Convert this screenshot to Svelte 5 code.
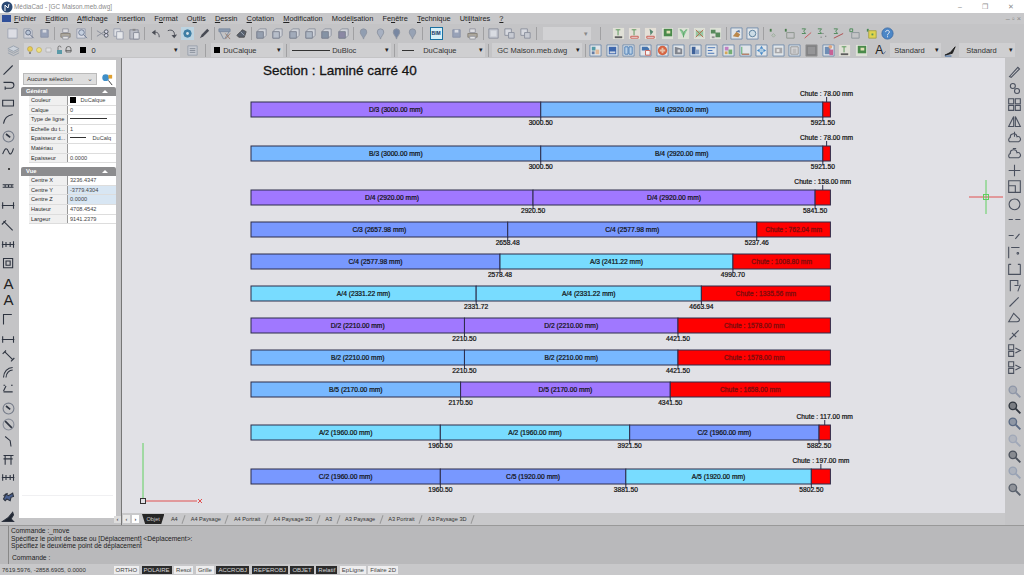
<script>
  const scale = 579.4 / 6000;
  const px = (mm) => 251 + mm * scale;
  const barEnd = px(6000);

  const colors = { D: "#a078ff", B: "#78b8ff", C: "#7898ff", A: "#78dcff" };

  const rows = [
    { y: 102, pieces: ["D/3|3000.00", "B/4|2920.00"], marks: [3000.5, 5921.5], chute: "78.00" },
    { y: 146, pieces: ["B/3|3000.00", "B/4|2920.00"], marks: [3000.5, 5921.5], chute: "78.00" },
    { y: 190, pieces: ["D/4|2920.00", "D/4|2920.00"], marks: [2920.5, 5841.5], chute: "158.00" },
    { y: 222, pieces: ["C/3|2657.98", "C/4|2577.98"], marks: [2658.48, 5237.46], chute: "762.04" },
    { y: 254, pieces: ["C/4|2577.98", "A/3|2411.22"], marks: [2578.48, 4990.7], chute: "1008.80" },
    { y: 286, pieces: ["A/4|2331.22", "A/4|2331.22"], marks: [2331.72, 4663.94], chute: "1335.56" },
    { y: 318, pieces: ["D/2|2210.00", "D/2|2210.00"], marks: [2210.5, 4421.5], chute: "1578.00" },
    { y: 350, pieces: ["B/2|2210.00", "B/2|2210.00"], marks: [2210.5, 4421.5], chute: "1578.00" },
    { y: 382, pieces: ["B/5|2170.00", "D/5|2170.00"], marks: [2170.5, 4341.5], chute: "1658.00" },
    { y: 425, pieces: ["A/2|1960.00", "A/2|1960.00", "C/2|1960.00"], marks: [1960.5, 3921.5, 5882.5], chute: "117.00" },
    { y: 469, pieces: ["C/2|1960.00", "C/5|1920.00", "A/5|1920.00"], marks: [1960.5, 3881.5, 5802.5], chute: "197.00" },
  ];

  const segments = (row) =>
    row.pieces.map((p, i) => {
      const [name, len] = p.split("|");
      const from = i === 0 ? 0 : row.marks[i - 1];
      return {
        x: px(from),
        w: (row.marks[i] - from) * scale,
        color: colors[name[0]],
        label: `${name} (${len} mm)`,
      };
    });

  // [before, underlined letter, after]
  const menus = [
    ["", "F", "ichier"], ["", "E", "dition"], ["", "A", "ffichage"], ["", "I", "nsertion"], ["F", "o", "rmat"],
    ["O", "u", "tils"], ["", "D", "essin"], ["", "C", "otation"], ["", "M", "odification"],
    ["Modél", "i", "sation"], ["Fe", "n", "être"], ["", "T", "echnique"], ["Uti", "l", "itaires"], ["", "?", ""],
  ];

  const props = [
    ["Couleur", "DuCalque", "swatch"], ["Calque", "0"], ["Type de ligne", "", "line"], ["Echelle du t...", "1"],
    ["Epaisseur d...", "DuCalq", "short"], ["Matériau", ""], ["Epaisseur", "0.0000"],
  ];
  const view = [
    ["Centre X", "3236.4347"], ["Centre Y", "-3779.4304", 1], ["Centre Z", "0.0000", 1],
    ["Hauteur", "4708.4542"], ["Largeur", "9141.2379"],
  ];

  const tabs = ["A4", "A4 Paysage", "A4 Portrait", "A4 Paysage 3D", "A3", "A3 Paysage", "A3 Portrait", "A3 Paysage 3D"];
  const flags = [
    ["ORTHO", 0], ["POLAIRE", 1], ["Resol", 0], ["Grille", 0], ["ACCROBJ", 1],
    ["REPEROBJ", 1], ["OBJET", 1], ["Relatif", 1], ["EpLigne", 0], ["Filaire 2D", 0],
  ];

  // each icon: list of [path, fill, stroke] on a 14x14 grid
  const B = "#5f7fa8";
  const box = (...rest) => [["M1 1h12v12H1z", "#e9eef2", B], ...rest];
  const pin = (c) => [["M7 2a3.5 3.5 0 013.5 3.5C10.5 8 7 11 7 13 7 11 3.5 8 3.5 5.5A3.5 3.5 0 017 2z", c, "#7f8898"]];
  const cube = (c) => [["M2 5l3-3h7v7l-3 3H2z", "#d4d7de", "#808694"], ["M2 5h7v7H2z", c, "#6b7284"]];
  const sigma = (c) => [["M2 2h4L4 4.5 6 7H2", 0, "#2d7a3c"], ["M5 12l7-6", 0, c]];
  const icons = {
    doc: [["M2 2h10v10H2z", "#e2e4ec", "#9aa0b0"]],
    find: [["M2 2h7l2 2v8H2z", "#d3d6e0", "#9098a8"], ["M4 6a2.6 2.6 0 105.2 0 2.6 2.6 0 00-5.2 0z", "#b5c4da", "#4c5a76"], ["M8.5 8l4 4", 0, "#4c5a76"]],
    save: [["M3 3h8v8H3z", "#8e9ab5", "#7c87a0"], ["M5 3h4v3H5z", "#dde0e8"]],
    print: [["M4 2h6v4H4z", "#e4e4e8", "#8a8e98"], ["M2 7h10v4H2z", "#a8a294", "#7a7468"], ["M4 10h6v3H4z", "#eee", "#8a8e98"]],
    view: [["M2 2h9v10H2z", "#dde0ea", "#8d94a6"], ["M4 6a3 3 0 106 0 3 3 0 00-6 0z", "#c6d2e4", "#5a6a88"], ["M9 8l4 4", 0, "#5a6a88"]],
    cut: [["M1 4l8 5M1 10l8-5", 0, "#7a8090"], ["M9 5a2 2 0 104 0 2 2 0 00-4 0zM9 9a2 2 0 104 0 2 2 0 00-4 0z", "#dde", "#333a48"]],
    copy: [["M2 2h7v8H2z", "#e4e6ec", "#9096a6"], ["M5 5h7v8H5z", "#eef0f4", "#9096a6"]],
    paste: [["M2 3h9v10H2z", "#b8bcc6", "#7a8090"], ["M5 2h3v2H5z", "#777"], ["M6 6h6v7H6z", "#e8eaf0", "#7a8090"]],
    undo: [["M11 11c0-5-3-6-6-5", 0, "#2c303a"], ["M7 3L3 6l4 3z", "#2c303a"]],
    redo: [["M3 4c5-2 8 1 7 6", 0, "#2c303a"], ["M7 9l3 3 3-4z", "#2c303a"]],
    orbit: [["M0 0h14v14H0z", "#bcd8e8"], ["M3 7a4 4 0 108 0 4 4 0 00-8 0z", "#1d6d9c", "#1d6d9c"], ["M5.5 7a1.5 1.5 0 103 0 1.5 1.5 0 00-3 0z", "#d8e8f0"]],
    brush: [["M2 12l2-4 6-6 2 2-6 6z", "#2a2e38"]],
    props: [["M1 2h12v3H1z", "#7e92ac", "#6a7c96"], ["M2 5l4 8M12 5l-5 8", 0, "#6a7c96"], ["M8 7l5 6M13 7l-5 6", 0, "#8a6a5a"]],
    eraser: [["M2 9l6-6 4 2-2 6H4z", "#3c4656", "#333"], ["M6 5l4 4", 0, "#9ab"]],
    c1: cube("#8a97aa"), c2: cube("#b4bdcc"), c3: cube("#9aa6b8"), c4: cube("#a8b4c4"), c5: cube("#76879e"), c6: cube("#7d7a9c"),
    p1: pin("#8595ac"), p2: pin("#a0acc0"), p3: pin("#66799a"), p4: pin("#8c9ab0"),
    sheet: [["M2 2h10v10H2z", "#c8ccd6", "#7e8494"], ["M4 4h6v6H4z", "#dfe2ea"]],
    sheets: [["M2 2h7v7H2z", "#dcdfe6", "#7e8494"], ["M6 6h6v6H6z", "#c8ccd6", "#7e8494"]],
    layers: [["M7 2l6 3-6 3-6-3z", "#cfd6df", "#8c98a8"], ["M1 7l6 3 6-3M1 9.5l6 3 6-3", 0, "#8c98a8"]],
    list: [["M2 2h10v10H2z", "#c8ccd4", "#9098a6"], ["M4 5h6M4 7h6M4 9h6", 0, "#777f8e"]],
    nor: [["M2 2h10v10H2z", "#f0f0e8"], ["M4 3h5M6.5 3v5", 0, "#3c8a3c"], ["M3 10h8", 0, "#222"]],
    t1: [["M1 1h12v12H1z", "#e8e8dc"], ["M4 3h5M6.5 3v6", 0, "#3c8a3c"], ["M3 10h8v2H3z", "#444"]],
    t2: [["M1 1h12v12H1z", "#ece6dc"], ["M4 3h5M6.5 3v6", 0, "#3c8a3c"], ["M3 10h8v2H3z", "#fff", "#c83c30"]],
    t3: [["M1 1h12v12H1z", "#ece6dc"], ["M6 2l4 3-3 4z", "#3c7a5c"], ["M3 10h8v2H3z", "#fff", "#c83c30"]],
    pflag: [["M1 1h12v12H1z", "#e4e8dc"], ["M3 2h9v8H3z", "#2c7c2c"], ["M6 4h4v3H6z", "#e8e8b0"]],
    leaf: [["M1 1h12v12H1z", "#e4e8dc"], ["M3 3c4 0 4 3 4 8M11 3c-3 0-4 3-4 8", "#7ccc8a", "#48a058"]],
    crossed: [["M1 1h12v12H1z", "#e4e8dc"], ["M3 4h8v6H3z", "#8cc89a"], ["M3 3l8 8M11 3l-8 8", 0, "#b8502c"]],
    tree: [["M1 1h12v12H1z", "#e4e8dc"], ["M2 3h5v4H2zM7 6h5v5H7z", "#3c7c40"], ["M3 10h3v2H3z", "#888"]],
    paint: box(["M3 10l4-5 4 3-2 3z", "#b8782c"], ["M6 5l4-2 1 3z", "#4a6a9a"]),
    circ: box(["M3.5 7a3.5 3.5 0 107 0 3.5 3.5 0 00-7 0z", "#cfe2ee", "#3c6c90"]),
    m1: [["M3 2h2v3H3z", "#2c6c30"], ["M5 9l2-2 2 2-2 2z", "#b8c4b8", "#9aa89a"]],
    m2: [["M2 2h2v3H2z", "#2c6c30"], ["M4 6h8v6H4z", 0, "#808a80"]],
    s1: [...sigma("#c83c3c")],
    s2: [["M2 2h4L4 4.5 6 7H2", 0, "#2d7a3c"], ["M7 7h1M10 10h1M5 11h1", 0, "#444"]],
    s3: [["M2 2h4L4 4.5 6 7H2", 0, "#2d7a3c"], ["M2 12l10-5", 0, "#a82c2c"]],
    s4: [["M2 2h3v3H2z", 0, "#2d7a3c"], ["M4 6h8v6H4z", 0, "#808a90"]],
    s5: [["M2 2h2v3H2z", "#2d7a3c"], ["M4 4h8v8H4z", "#e8d830", "#a09a30"], ["M7 7h2v2H7z", "#3c8a3c"]],
    help: [["M7 1a6 6 0 110 12A6 6 0 017 1z", "#2f78c8", "#1f5aa0"], ["M5 5.5C5 3 9 3 9 5.5 9 7 7 7 7 9", 0, "#fff"], ["M6.5 10h1v1h-1z", "#fff"]],
    b1: box(["M3 3h4v4H3z", "#3a90a0"], ["M7 6h4v5H7z", "#e8b890"], ["M3 8h3v3H3z", "#4a6a9a"]),
    b2: box(["M3 3h8v8H3z", "#1f52a8"], ["M4 8h6v2H4z", "#cfd8e8"]),
    b3: box(["M3 3h3.5v8H3zM7.5 3H11v8H7.5z", "#b8d4ee", "#2f6cb0"]),
    b4: box(["M3 3h6l2 2v2H3z", "#2560a8"], ["M7 7h5v5H7z", "#fff", "#c84a3c"]),
    b5: box(["M7 2a5 5 0 110 10A5 5 0 017 2z", "#d84a20"], ["M6 4h2v6H6zM4 6h6v2H4z", "#f0c0a0"]),
    b6: box(["M3 3l8 2v6H3z", "#70757f"], ["M6 6h3v3H6z", "#dadade"]),
    b7: box(["M3 3h4v8H3z", "#1f4a90"], ["M7 6h4v5H7z", "#7c9cc8"]),
    b8: box(["M3 4h8M3 7h5M3 10h7", 0, "#1f5ab0"]),
    b9: box(["M3 3h4v4H3z", "#c070c0"], ["M7 6h4v5H7z", "#60a860"], ["M3 8h3v3H3z", "#d8a040"]),
    b10: box(["M3 3v8h8", 0, "#30a050"], ["M3 11h8", 0, "#d84a40"]),
    b11: box(["M7 2l2 3H5zM7 12l2-3H5zM2 7l3-2v4zM12 7l-3-2v4z", "#2a7cc8"], ["M5.5 5.5h3v3h-3z", "#9cc8e8"]),
    b12: box(["M3 4h8v6H3z", "#a0a0a4"], ["M5 5.5h3v3H5z", "#ececec"]),
    b13: box(["M3 3h8v8H3z", "#dcdcde", "#888"], ["M5 5h4v5H5z", "#bbb"]),
    b14: [["M1 1h12v12H1z", "#6e6e70", "#888"], ["M3 3h8v8H3z", "#8a8a8c"]],
    b15: box(["M3 3h6v8H3z", "#5a80b0"], ["M7 3a2 2 0 104 0 2 2 0 00-4 0z", "#e8a070"], ["M8 6h4v6H8z", "#c84a8a"]),
  };

  const row1 = [
    ["doc", "find", "save"], ["print", "view"], ["cut", "copy", "paste"], ["undo", "redo", "orbit", "brush"],
    ["props", "eraser"], ["c1", "c2", "c3", "c4", "c5", "c6"], ["p1", "p2", "p3", "p4"],
  ];
  const row1c = [["save", "print"], ["sheet", "sheets", "sheets"]];
  const row1d = [["t1", "t2", "t3", "pflag", "leaf", "crossed", "tree"], ["paint", "circ"], ["m1", "m2", "s1", "s2", "s3", "s4", "s5", "help"]];
  const row2 = ["b1", "b2", "b3", "b4", "b5", "b6", "b7", "b8", "b9", "b10", "b11", "b12", "b13", "b14", "b15", "t1", "pflag"];

  const leftTools = [
    ["M3 14L14 3", "M3 4h9a3 3 0 010 7H5M5 9v4", "M2 5h13v7H2z", "M3 14C4 7 8 4 14 3", "C", "M2 11c3-8 5-8 7-3s4 3 6-4", ".", "M2 8h13M2 11h13M5 8v3M9 8v3M13 8v3"],
    ["M1 9h15M2 5v8M15 5v8"],
    ["M3 5l11 11M1 9l5-5"],
    ["M1 9h15M2 5v8M15 5v8M6 6v6M11 6v6"],
    ["M3 3h11v11H3zM6 6h5v5H6z"],
    ["A", "A"],
    ["M3 15V3h10"],
    ["M1 9h15M2 5v8M15 5v8", "M4 4l10 10M2 7l4-4M12 16l4-4", "M3 15C3 8 8 3 14 3M6 15c0-5 4-9 8-9", "M3 5h2M12 5h2M3 13h11M6 6l-3 6"],
    ["C", "E", "M5 3l6 5 1 7"],
    ["M3 3h12M5 3v11M12 3v11M3 7h11", "M1 9h15M2 5v8M15 5v8M6 6v6M11 6v6"],
    ["S"],
    ["P"],
  ];
  const rightTools = [
    "M3 15L13 4l2 2L5 16z", "M4 6a3 3 0 106 0 3 3 0 00-6 0zM9 12a3 3 0 106 0 3 3 0 00-6 0z", "M2 2h6v6H2zM10 2h6v6h-6zM2 10h6v6H2zM10 10h6v6h-6z",
    "M8 3v12H2zM10 3v12h6z", "M3 14a3 3 0 011-5 4 4 0 018-1 3 3 0 012 6zM9 2v6", "M3 14a3 3 0 011-5 4 4 0 018-1 3 3 0 012 6zM7 3h4",
    "M9 2v14M2 9h14", "M2 2h14v14H2zM2 8h8v8", "C", "M2 9h5M10 9h6", "M2 9h6M10 13l5-6", "M2 2v14M5 3h10M12 10a1 1 0 102 0 1 1 0 00-2 0",
    "M2 4h3M13 4h3M2 4v12h14V4", "M4 16V3h9v5M16 8l-3 8M9 9h5", "M3 15L14 4", "M2 14L8 4l7 7c0 3-2 3-3 3z", "M3 15l5-5M9 9l5-5M6 7l5 5",
    "M2 2h6v6H2zM2 10h6v6H2zM10 6l6 3-6 3", "M2 2h6v6H2zM2 10h6v6H2zM10 6l6 3-6 3",
  ];
  const rightZoom = ["#8f97a8", "#30363f", "#5a6a84", "#a0a8b8", "#4b515c", "#98a2b4", "#59606c"];
</script>

{#snippet icon(name)}
  <svg class="ico" viewBox="0 0 14 14" fill="none" stroke-width="1">
    {#each icons[name] as [d, f, s]}
      <path {d} fill={f || "none"} stroke={s || "none"} />
    {/each}
  </svg>
{/snippet}

<div class="app">
  <header class="titlebar">
    <svg width="12" height="12" viewBox="0 0 12 12"><circle cx="6" cy="6" r="5.5" fill="#2c4a74" /><path d="M4 10V4l3 3 1-4" stroke="#fff" fill="none" /></svg>
    <span class="title">MédiaCad - [GC Maison.meb.dwg]</span>
    <span class="winbtns"><i>–</i><i>❐</i><i>✕</i></span>
  </header>

  <nav class="menubar">
    <span class="mdi"></span>
    {#each menus as [a, u, b]}
      <span class="menu">{a}<u>{u}</u>{b}</span>
    {/each}
    <span class="childbtns">– ▫ ×</span>
  </nav>

  <div class="toolbar t1">
    {#each row1 as group}
      {#each group as name}{@render icon(name)}{/each}
      <span class="sep"></span>
    {/each}
    <span class="bim">BIM</span>
    {#each row1c[0] as name}{@render icon(name)}{/each}
    <span class="sep"></span>
    {#each row1c[1] as name}{@render icon(name)}{/each}
    <span class="sep"></span>
    <span class="dim-combo">▾</span>
    <span class="sep wide"></span>
    {#each row1d as group, i}
      {#each group as name}{@render icon(name)}{/each}
      {#if i < row1d.length - 1}<span class="sep"></span>{/if}
    {/each}
  </div>

  <div class="toolbar t2">
    {@render icon("layers")}
    <span class="layers">
      <svg width="50" height="10" viewBox="0 0 50 10">
        <circle cx="3" cy="4" r="2.5" fill="#e8cc50" stroke="#a89040" stroke-width=".5" /><path d="M2 7h2v2H2z" fill="#888" />
        <circle cx="12" cy="5" r="2.5" fill="#efe080" stroke="#b09c40" stroke-width=".5" />
        <path d="M19 3h5v4h-5z" fill="#e0e0e2" stroke="#aaa" stroke-width=".6" />
        <path d="M30 5h5v4h-5z" fill="#5a9aa8" /><path d="M31 5V2.5a1.5 1.5 0 013 0" fill="none" stroke="#555" stroke-width=".7" />
        <path d="M39 4a2.5 2.5 0 015 0v3h-5z" fill="none" stroke="#555" stroke-width=".8" /><path d="M38.5 5.5h6" stroke="#555" stroke-width=".7" />
      </svg>
      <i class="blk"></i><span>0</span>
      <span class="arrow">▾</span>
    </span>
    <span class="spacer">{@render icon("list")}</span>
    <span class="sep"></span>
    <span class="combo c1"><i class="blk"></i>DuCalque<span class="arrow">▾</span></span>
    <span class="sep"></span>
    <span class="combo c2"><i class="ln"></i>DuBloc<span class="arrow">▾</span></span>
    <span class="sep"></span>
    <span class="combo c3"><i class="ln short"></i>DuCalque<span class="arrow">▾</span></span>
    <span class="sep"></span>
    <span class="combo c4">GC Maison.meb.dwg<span class="arrow">▾</span></span>
    <span class="sep"></span>
    {#each row2 as name}{@render icon(name)}{/each}
    <span class="glyph">A<svg width="6" height="8" viewBox="0 0 6 8"><path d="M0 7l5-6" stroke="#30528a" stroke-width="1.4" /></svg></span>
    <span class="combo c5">Standard<span class="arrow">▾</span></span>
    <svg class="penicon" width="13" height="13" viewBox="0 0 14 14"><path d="M1 12l6-3 5-6-3 7-8 2z" fill="#222" stroke="#222" /><path d="M1 13h7" stroke="#3060a0" /></svg>
    <span class="combo c6">Standard<span class="arrow">▾</span></span>
  </div>

  <main class="work">
    <aside class="lefttools">
      {#each leftTools as group}
        <div class="tgroup">
          {#each group as d}
            <span class="tool">
              {#if d === "A"}
                <b>A</b>
              {:else if d === "."}
                <em></em>
              {:else}
                <svg viewBox="0 0 18 18" fill="none" stroke="#2e3440" stroke-width="1.3">
                  {#if d === "C"}
                    <circle cx="9" cy="9" r="6.5" stroke="#777d8a" /><path d="M6 6l5 4" stroke-width="2" />
                  {:else if d === "E"}
                    <circle cx="9" cy="9" r="6.5" stroke="#8a8f9a" /><path d="M5 5l8 8" stroke-width="2" />
                  {:else if d === "S"}
                    <path d="M3 12l3-6 3 2 5-3 1 4-3 1-1 4-4-2-2 2z" fill="#4a6090" /><path d="M3 8l5-3" />
                  {:else if d === "P"}
                    <path d="M2 15l7-5 5-6 1 3-3 5 3 3z" fill="#1f2530" />
                  {:else}
                    <path {d} />
                  {/if}
                </svg>
              {/if}
            </span>
          {/each}
        </div>
      {/each}
    </aside>

    <section class="panel">
      <div class="sheet">
        <div class="selrow">
          <span class="select">Aucune sélection<span class="chev">⌄</span></span>
          <svg width="13" height="13" viewBox="0 0 14 14"><circle cx="5" cy="5" r="3.6" fill="#3f8fc8" /><rect x="8" y="2" width="4" height="4" fill="#e0a030" /><path d="M8 8l4 5" stroke="#333" /></svg>
        </div>
        <div class="group">Général<span class="caret"></span></div>
        {#each props as [k, v, kind]}
          <div class="prop">
            <span class="key">{k}</span>
            <span class="val">
              {#if kind === "swatch"}<i class="blk big"></i>{/if}
              {#if kind === "line"}<i class="ln panelline"></i>{/if}
              {#if kind === "short"}<i class="ln panelshort"></i>{/if}
              {v}
            </span>
          </div>
        {/each}
        <div class="group vue">Vue<span class="caret"></span></div>
        {#each view as [k, v, on]}
          <div class="prop"><span class="key">{k}</span><span class="val" class:on>{v}</span></div>
        {/each}
        <div class="descr"></div>
      </div>
      <span class="sheetfoot">‹</span>
    </section>

    <div class="center">
      <svg class="canvas" viewBox="122 58 883 455" width="883" height="455">
        <text x="263" y="75" class="heading">Section : Laminé carré 40</text>
        {#each rows as row}
          {@const last = row.marks[row.marks.length - 1]}
          {@const mid = (px(last) + barEnd) / 2}
          {#each segments(row) as s}
            <rect x={s.x} y={row.y} width={s.w} height="15" fill={s.color} class="bar" />
            <text x={s.x + s.w / 2} y={row.y + 8} class="label">{s.label}</text>
          {/each}
          <rect x={px(last)} y={row.y} width={barEnd - px(last)} height="15" fill="#ff0000" class="bar" />
          {#if last < 5500}
            <text x={mid} y={row.y + 8} class="label waste">Chute : {row.chute} mm</text>
          {:else}
            <line x1={mid} x2={mid} y1={row.y - 5} y2={row.y} class="tick" />
            <text x={mid} y={row.y - 7.5} class="label">Chute : {row.chute} mm</text>
          {/if}
          {#each row.marks as m}
            <line x1={px(m)} x2={px(m)} y1={row.y + 15} y2={row.y + 19} class="tick" />
            <text x={px(m)} y={row.y + 21} class="label">{m.toFixed(2)}</text>
          {/each}
        {/each}

        <!-- crosshair and ucs -->
        <line x1="969" x2="1003" y1="197" y2="197" stroke="#e05050" />
        <g stroke="#60d060" fill="none"><line x1="986" x2="986" y1="180" y2="214" /><rect x="983.5" y="194.5" width="5" height="5" /></g>
        <line x1="143" x2="143" y1="443" y2="498" stroke="#60d060" />
        <line x1="146" x2="197" y1="501" y2="501" stroke="#e05050" />
        <rect x="140.5" y="498.5" width="5" height="5" fill="none" stroke="#333" />
        <path d="M198 499l4 4m0-4l-4 4" stroke="#e05050" />
      </svg>

      <div class="tabs">
        <span class="nav">‹</span><span class="nav on">›</span>
        <span class="tab active">Objet</span>
        {#each tabs as t}<span class="tab">{t}</span>{/each}
      </div>
    </div>

    <aside class="righttools">
      {#each rightTools as d}
        <span class="tool">
          <svg width="15" height="15" viewBox="0 0 18 18" fill="none" stroke="#4a505e" stroke-width="1.3">
            {#if d === "C"}<circle cx="9" cy="10" r="6.5" />{:else}<path {d} />{/if}
          </svg>
        </span>
      {/each}
      <span class="rsep"></span>
      {#each rightZoom as c}
        <span class="tool">
          <svg width="15" height="15" viewBox="0 0 18 18" fill="none" stroke={c} stroke-width="1.6">
            <circle cx="7" cy="7" r="4.5" fill={c} fill-opacity="0.5" /><path d="M10.5 10.5L16 16" stroke-width="2.2" />
          </svg>
        </span>
      {/each}
    </aside>
  </main>

  <section class="cmd">
    <div class="cmdlog">
      <div>Commande :_move</div>
      <div>Spécifiez le point de base ou [Déplacement] &lt;Déplacement&gt;:</div>
      <div>Spécifiez le deuxième point de déplacement</div>
      <div class="prompt">Commande :</div>
    </div>
  </section>

  <footer class="status">
    <span class="coords">7619.5976, -2858.6905, 0.0000</span>
    {#each flags as [f, on]}
      <span class="flag" class:on>{f}</span>
    {/each}
  </footer>
</div>

<style>
  :global(body) {
    margin: 0;
    overflow: hidden;
    background: #c0c0c0;
  }

  .app {
    width: 1024px;
    height: 575px;
    display: flex;
    flex-direction: column;
    overflow: hidden;
    font-family: "Liberation Sans", Arial, sans-serif;
    font-size: 8px;
    color: #2a2a2a;
    background: #c4c4c6;
  }

  .titlebar {
    height: 13px;
    flex: none;
    background: #fff;
    display: flex;
    align-items: center;
    gap: 1px;
    padding-left: 1px;
    color: #8a8a8a;
    font-size: 6.4px;
  }
  .winbtns {
    margin-left: auto;
    display: flex;
    gap: 20px;
    padding-right: 10px;
    font-size: 7px;
  }
  .winbtns i {
    font-style: normal;
  }

  .menubar {
    height: 11px;
    flex: none;
    display: flex;
    align-items: center;
    gap: 9.1px;
    padding-left: 2px;
    background: #c8c8ca;
    font-size: 7.4px;
    color: #222;
    white-space: nowrap;
  }
  .mdi {
    width: 9px;
    height: 7px;
    background: #30509a;
    margin-right: -6px;
  }
  .childbtns {
    margin-left: auto;
    padding-right: 3px;
    color: #888;
  }

  .toolbar {
    display: flex;
    align-items: center;
    flex: none;
    background: #c4c4c6;
    white-space: nowrap;
  }
  .ico {
    width: 13px;
    height: 13px;
    flex: none;
    display: block;
    opacity: 0.8;
  }
  .t1 {
    height: 18px;
    padding-left: 5.5px;
    gap: 3.3px;
  }
  .t2 {
    height: 16px;
    padding-left: 7px;
    gap: 3px;
    font-size: 7.5px;
  }
  .t2 .ico {
    margin-right: 0.6px;
  }
  .sep {
    width: 1px;
    height: 13px;
    background: #a0a0a2;
    flex: none;
  }
  .sep.wide {
    margin: 0 7px 0 6px;
  }
  .bim {
    width: 13px;
    height: 13px;
    margin: 0 4px 0 3px;
    flex: none;
    background: #d8f0f8;
    border: 1px solid #1a70a0;
    box-sizing: border-box;
    color: #183060;
    font-size: 5px;
    font-weight: 700;
    line-height: 11px;
    text-align: center;
  }
  .dim-combo {
    width: 48px;
    height: 13px;
    margin-left: 3px;
    background: #d2d2d4;
    color: #888;
    text-align: right;
    padding-right: 3px;
    line-height: 13px;
    box-sizing: border-box;
    font-size: 7px;
  }

  .layers {
    width: 156px;
    height: 14px;
    display: flex;
    align-items: center;
    gap: 3px;
    padding-left: 3px;
    background: #d0d0d2;
    box-sizing: border-box;
    flex: none;
  }
  .spacer {
    margin: 0 3px;
  }
  .blk {
    display: inline-block;
    width: 6px;
    height: 6px;
    background: #000;
    margin-right: 3px;
    flex: none;
  }
  .blk.big {
    vertical-align: -1px;
  }
  .ln {
    display: inline-block;
    width: 38px;
    border-top: 1px solid #333;
    margin-right: 2px;
    flex: none;
  }
  .ln.short {
    width: 12px;
    margin-right: 9px;
  }
  .ln.panelline {
    width: 37px;
    vertical-align: 2px;
    margin: 0;
  }
  .ln.panelshort {
    width: 16px;
    vertical-align: 2px;
    margin-right: 5px;
  }
  .arrow {
    font-size: 7px;
    color: #222;
    margin-left: auto;
    padding: 0 2px;
  }
  .combo {
    height: 14px;
    display: flex;
    align-items: center;
    box-sizing: border-box;
    background: #cfcfd1;
    flex: none;
    color: #333;
  }
  .c1 { width: 72px; margin-left: 2px; padding-left: 3px; }
  .c2 { width: 101px; padding-left: 2px; }
  .c3 { width: 87px; padding-left: 4px; }
  .c4 { width: 90px; padding-left: 5px; }
  .c5 { width: 51px; padding-left: 4px; margin-left: 1px; }
  .c6 { width: 56px; padding-left: 7px; margin-left: -1px; }
  .glyph {
    display: flex;
    align-items: flex-end;
    font-size: 12px;
    color: #222;
    margin-left: 4px;
    width: 11px;
    overflow: hidden;
  }
  .penicon {
    flex: none;
  }

  .work {
    height: 467px;
    flex: none;
    display: flex;
    min-height: 0;
  }

  .lefttools {
    width: 17px;
    flex: none;
    display: flex;
    flex-direction: column;
    align-items: center;
    padding-top: 3.75px;
    gap: 3.1px;
    background: #c4c4c6;
    box-sizing: border-box;
  }
  .tgroup {
    display: flex;
    flex-direction: column;
  }
  .lefttools .tool {
    height: 16.5px;
    display: flex;
    align-items: center;
    justify-content: center;
    flex: none;
    overflow: hidden;
  }
  .lefttools svg {
    width: 15px;
    height: 15px;
  }
  .tool b {
    font-weight: 400;
    font-size: 15px;
    line-height: 1;
    color: #222;
  }
  .tool em {
    width: 2px;
    height: 2px;
    background: #444;
  }

  .panel {
    width: 105px;
    flex: none;
    display: flex;
    padding: 2px 0 0 2px;
    box-sizing: border-box;
    background: #c4c4c6;
    border-right: 1px solid #777;
    position: relative;
  }
  .sheet {
    width: 97px;
    height: 458px;
    background: #fff;
    padding-top: 11px;
    box-sizing: border-box;
    flex: none;
    display: flex;
    flex-direction: column;
  }
  .descr {
    margin: auto 3px 0;
    height: 22px;
    border-top: 1px solid #f0f0f2;
  }
  .sheetfoot {
    position: absolute;
    right: 0;
    bottom: 2px;
    width: 7px;
    height: 7px;
    background: #ddd;
    line-height: 7px;
    text-align: center;
    font-size: 6px;
  }
  .selrow {
    display: flex;
    align-items: center;
    gap: 4px;
    padding-left: 4px;
    height: 16px;
    flex: none;
  }
  .select {
    width: 74px;
    height: 12px;
    background: #dedede;
    border: 1px solid #bbb;
    box-sizing: border-box;
    display: flex;
    align-items: center;
    justify-content: space-between;
    padding: 0 3px;
    font-size: 6px;
  }
  .chev {
    font-size: 7px;
    line-height: 6px;
    color: #555;
  }
  .group {
    height: 9px;
    flex: none;
    background: #8c8c8e;
    color: #fff;
    font-weight: 700;
    font-size: 5.8px;
    line-height: 9px;
    padding-left: 5px;
    margin-left: 2px;
    border-radius: 2px 2px 0 0;
    position: relative;
  }
  .group.vue {
    margin-top: 4px;
  }
  .caret {
    position: absolute;
    right: 8px;
    top: 3px;
    border: 3px solid transparent;
    border-top: 0;
    border-bottom: 3px solid #fff;
  }
  .prop {
    height: 9.6px;
    flex: none;
    display: flex;
    margin-left: 10px;
    font-size: 5.6px;
    line-height: 9.6px;
    border-bottom: 1px solid #ddd;
    box-sizing: border-box;
    overflow: hidden;
    white-space: nowrap;
  }
  .key {
    width: 39px;
    flex: none;
    background: #f0f0f0;
    padding-left: 2px;
    border-right: 1px solid #999;
    box-sizing: border-box;
    overflow: hidden;
  }
  .val {
    padding-left: 2px;
    flex: 1;
    overflow: hidden;
    color: #444;
  }
  .val.on {
    background: #d8e6f3;
  }

  .center {
    width: 883px;
    flex: none;
    display: flex;
    flex-direction: column;
    min-width: 0;
  }
  .canvas {
    display: block;
    flex: none;
    background: #e1e1e6;
    font-family: "Liberation Sans", Arial, sans-serif;
  }
  .heading {
    font-size: 13.5px;
    fill: #141414;
    stroke: #141414;
    stroke-width: 0.3px;
  }
  .bar {
    stroke: #2c2c4a;
    stroke-width: 1;
  }
  .label {
    font-size: 6.7px;
    fill: #111;
    stroke: #111;
    stroke-width: 0.22px;
    text-anchor: middle;
    dominant-baseline: middle;
  }
  .waste {
    fill: #800c0c;
    stroke: #800c0c;
    stroke-width: 0.3px;
  }
  .tick {
    stroke: #2c2c4a;
    stroke-width: 1;
  }

  .tabs {
    height: 12px;
    display: flex;
    align-items: center;
    padding-left: 1px;
    background: #c8c8ca;
    font-size: 5.6px;
    color: #333;
    white-space: nowrap;
  }
  .nav {
    width: 7px;
    height: 8px;
    background: #e8e8e8;
    line-height: 8px;
    text-align: center;
    margin-right: 2px;
  }
  .nav.on {
    background: #fff;
    color: #000;
    margin-right: 3px;
  }
  .tab {
    padding: 0 6.5px;
    line-height: 10px;
    position: relative;
  }
  .tab::after {
    content: "";
    position: absolute;
    right: 0;
    top: 1px;
    height: 9px;
    border-right: 1px solid #999;
    transform: rotate(20deg);
  }
  .tab.active {
    background: #262626;
    color: #ccc;
    padding: 0 4.5px;
    clip-path: polygon(0 0, 100% 0, 86% 100%, 14% 100%);
  }
  .tab.active::after {
    display: none;
  }

  .righttools {
    width: 19px;
    flex: none;
    display: flex;
    flex-direction: column;
    align-items: center;
    padding-top: 5.8px;
    background: #c4c4c6;
    box-sizing: border-box;
  }
  .righttools .tool {
    height: 16.4px;
    display: flex;
    align-items: center;
    flex: none;
  }
  .rsep {
    height: 7.6px;
    flex: none;
  }

  .cmd {
    height: 39px;
    flex: none;
    padding-left: 8px;
    border-top: 1px solid #999;
    background: #b9b9bb;
    box-sizing: border-box;
  }
  .cmdlog {
    height: 37px;
    padding: 1px 0 0 2px;
    border-left: 1px solid #888;
    font-size: 6.7px;
    line-height: 7.6px;
    color: #1c1c1c;
  }
  .prompt {
    margin: 4px 0 0 1px;
  }

  .status {
    height: 11px;
    flex: none;
    display: flex;
    align-items: center;
    gap: 2.5px;
    background: #c8c8ca;
    font-size: 6px;
    color: #333;
  }
  .coords {
    width: 111px;
    padding-left: 2px;
    box-sizing: border-box;
    flex: none;
    white-space: nowrap;
  }
  .flag {
    padding: 0 2px;
    line-height: 8px;
    background: #ededee;
    color: #444;
    white-space: nowrap;
  }
  .flag.on {
    background: #2b2b2b;
    color: #d8d8d8;
  }
</style>
